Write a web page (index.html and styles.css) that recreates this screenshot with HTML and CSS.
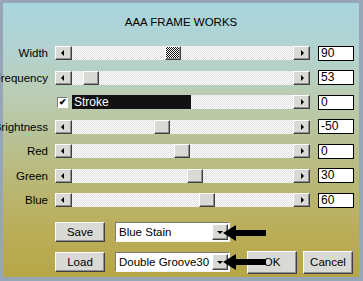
FILE: index.html
```html
<!DOCTYPE html>
<html lang="en">

<head>
    <meta charset="UTF-8">
    <meta name="viewport" content="width=device-width, initial-scale=1.0">
    <title>AAA FRAME WORKS</title>
    <link rel="stylesheet" href="styles.css">
</head>

<body>
    <div class="dialog">
        <div class="title">AAA FRAME WORKS</div>

        <div class="rows">
            <div class="row">
                <span class="label">Width</span>
                <div class="slider">
                    <span class="arrow-btn left"></span>
                    <div class="track"><span class="thumb focus" style="left: 93px;"></span></div>
                    <span class="arrow-btn right"></span>
                </div>
                <span class="value">90</span>
            </div>
            <div class="row">
                <span class="label">Frequency</span>
                <div class="slider">
                    <span class="arrow-btn left"></span>
                    <div class="track"><span class="thumb" style="left: 11px;"></span></div>
                    <span class="arrow-btn right"></span>
                </div>
                <span class="value">53</span>
            </div>
            <div class="row">
                <span class="label"></span>
                <div class="slider">
                    <span class="check-box">&#10004;</span>
                    <span class="check-text">Stroke</span>
                    <div class="track"></div>
                    <span class="arrow-btn right"></span>
                </div>
                <span class="value">0</span>
            </div>
            <div class="row">
                <span class="label">Brightness</span>
                <div class="slider">
                    <span class="arrow-btn left"></span>
                    <div class="track"><span class="thumb" style="left: 82px;"></span></div>
                    <span class="arrow-btn right"></span>
                </div>
                <span class="value">-50</span>
            </div>
            <div class="row">
                <span class="label">Red</span>
                <div class="slider">
                    <span class="arrow-btn left"></span>
                    <div class="track"><span class="thumb" style="left: 102px;"></span></div>
                    <span class="arrow-btn right"></span>
                </div>
                <span class="value">0</span>
            </div>
            <div class="row">
                <span class="label">Green</span>
                <div class="slider">
                    <span class="arrow-btn left"></span>
                    <div class="track"><span class="thumb" style="left: 115px;"></span></div>
                    <span class="arrow-btn right"></span>
                </div>
                <span class="value">30</span>
            </div>
            <div class="row">
                <span class="label">Blue</span>
                <div class="slider">
                    <span class="arrow-btn left"></span>
                    <div class="track"><span class="thumb" style="left: 127px;"></span></div>
                    <span class="arrow-btn right"></span>
                </div>
                <span class="value">60</span>
            </div>
        </div>

        <div class="footer">
            <div class="preset-row">
                <button class="btn">Save</button>
                <div class="combo"><span class="combo-text">Blue Stain</span><span class="combo-btn"></span></div>
            </div>
            <div class="preset-row">
                <button class="btn">Load</button>
                <div class="combo"><span class="combo-text">Double Groove30</span><span class="combo-btn"></span></div>
                <button class="btn ok">OK</button>
                <button class="btn">Cancel</button>
            </div>

            <!-- pointer arrows drawn over the dialog -->
            <svg class="pointer pointer-save" width="44" height="16" viewBox="0 0 44 16">
                <polygon points="0,8 13,0 13,5 43,5 43,11 13,11 13,16" fill="#000" />
            </svg>
            <svg class="pointer pointer-load" width="44" height="16" viewBox="0 0 44 16">
                <polygon points="0,8 13,0 13,5 43,5 43,11 13,11 13,16" fill="#000" />
            </svg>
        </div>
    </div>
</body>

</html>
```

FILE: styles.css
```css
html,
body {
    margin: 0;
    padding: 0;
}

body {
    font-family: "Liberation Sans", Arial, sans-serif;
    font-size: 11px;
    color: #000;
}

.dialog {
    position: relative;
    width: 363px;
    height: 281px;
    box-sizing: border-box;
    border-style: solid;
    border-color: #97a6b7;
    border-width: 3px 4px 4px 3px;
    padding-top: 12px;
    background: linear-gradient(to bottom, #a9d5de 0%, #b3d3d0 18%, #bacdb4 33%, #b8c194 50%, #b9b878 65%, #baae5a 82%, #b6a647 100%);
}

.title {
    height: 14px;
    line-height: 14px;
    font-size: 11.5px;
    text-align: center;
    margin-bottom: 12px;
}

/* slider rows */
.rows {
    display: flex;
    flex-direction: column;
}

.row {
    display: flex;
    align-items: center;
    height: 24.5px;
}

.label {
    width: 45px;
    margin-right: 7px;
    text-align: right;
    white-space: nowrap;
    direction: rtl;
    font-size: 11.5px;
}

.slider {
    display: flex;
    align-items: center;
    width: 255px;
    height: 14px;
}

.track {
    position: relative;
    flex: 1;
    height: 14px;
    background: repeating-conic-gradient(#ffffff 0 25%, #dedede 0 50%) 0 0 / 2px 2px;
}

.arrow-btn,
.thumb,
.combo-btn,
.btn {
    box-sizing: border-box;
    background-color: #d9d9d6;
    border: 1px solid;
    border-color: #ffffff #404040 #404040 #ffffff;
    box-shadow: inset -1px -1px #8f8f8f;
}

.arrow-btn {
    position: relative;
    width: 17px;
    height: 14px;
}

.arrow-btn::after {
    content: "";
    position: absolute;
    top: 3px;
    border-style: solid;
    border-color: transparent;
}

.arrow-btn.left::after {
    left: 5px;
    border-width: 3px 3px 3px 0;
    border-right-color: #000;
}

.arrow-btn.right::after {
    left: 7px;
    border-width: 3px 0 3px 3px;
    border-left-color: #000;
}

.thumb {
    position: absolute;
    top: 0;
    width: 16px;
    height: 14px;
}

.thumb.focus {
    background: repeating-conic-gradient(#111 0 25%, #fff 0 50%) 0 0 / 2px 2px;
    border-color: #ffffff #404040 #404040 #ffffff;
}

.check-box {
    box-sizing: border-box;
    width: 11px;
    height: 11px;
    margin: 0 4px 0 2px;
    background: #fff;
    border: 1px solid;
    border-color: #808080 #fff #fff #808080;
    font-size: 9px;
    line-height: 9px;
    text-align: center;
    font-weight: bold;
}

.check-text {
    width: 117px;
    height: 14px;
    line-height: 14px;
    padding-left: 2px;
    background: #121212;
    color: #fff;
    font-size: 12px;
}

.value {
    box-sizing: border-box;
    width: 36px;
    height: 15px;
    margin-left: 8px;
    padding-left: 2px;
    line-height: 13px;
    background: #fff;
    border: 1px solid #000;
    font-size: 12px;
}

/* save / load area */
.footer {
    display: flex;
    flex-direction: column;
    gap: 9px;
    margin-top: 9px;
    padding-left: 52px;
}

.preset-row {
    display: flex;
    align-items: center;
    height: 21px;
}

.btn {
    width: 50px;
    height: 20px;
    padding: 0;
    font-family: "Liberation Sans", Arial, sans-serif;
    font-size: 11.5px;
    color: #000;
}

.btn.ok {
    height: 23px;
    margin-left: 17px;
    margin-right: 6px;
}

.btn.ok + .btn {
    height: 23px;
}

.combo {
    display: flex;
    align-items: center;
    box-sizing: border-box;
    width: 115px;
    height: 20px;
    margin-left: 10px;
    padding: 1px;
    background: #fff;
    border: 1px solid;
    border-color: #7a7a7a #f4f4f4 #f4f4f4 #7a7a7a;
    font-size: 11.5px;
}

.combo-text {
    flex: 1;
    padding-left: 2px;
    white-space: nowrap;
}

.combo-btn {
    position: relative;
    width: 16px;
    height: 16px;
}

.combo-btn::after {
    content: "";
    position: absolute;
    top: 6px;
    left: 4px;
    border-style: solid;
    border-color: #000 transparent transparent;
    border-width: 3px 3px 0;
}

.pointer {
    position: absolute;
    left: 220px;
}

.pointer-save {
    top: 222px;
}

.pointer-load {
    top: 251px;
}
```
